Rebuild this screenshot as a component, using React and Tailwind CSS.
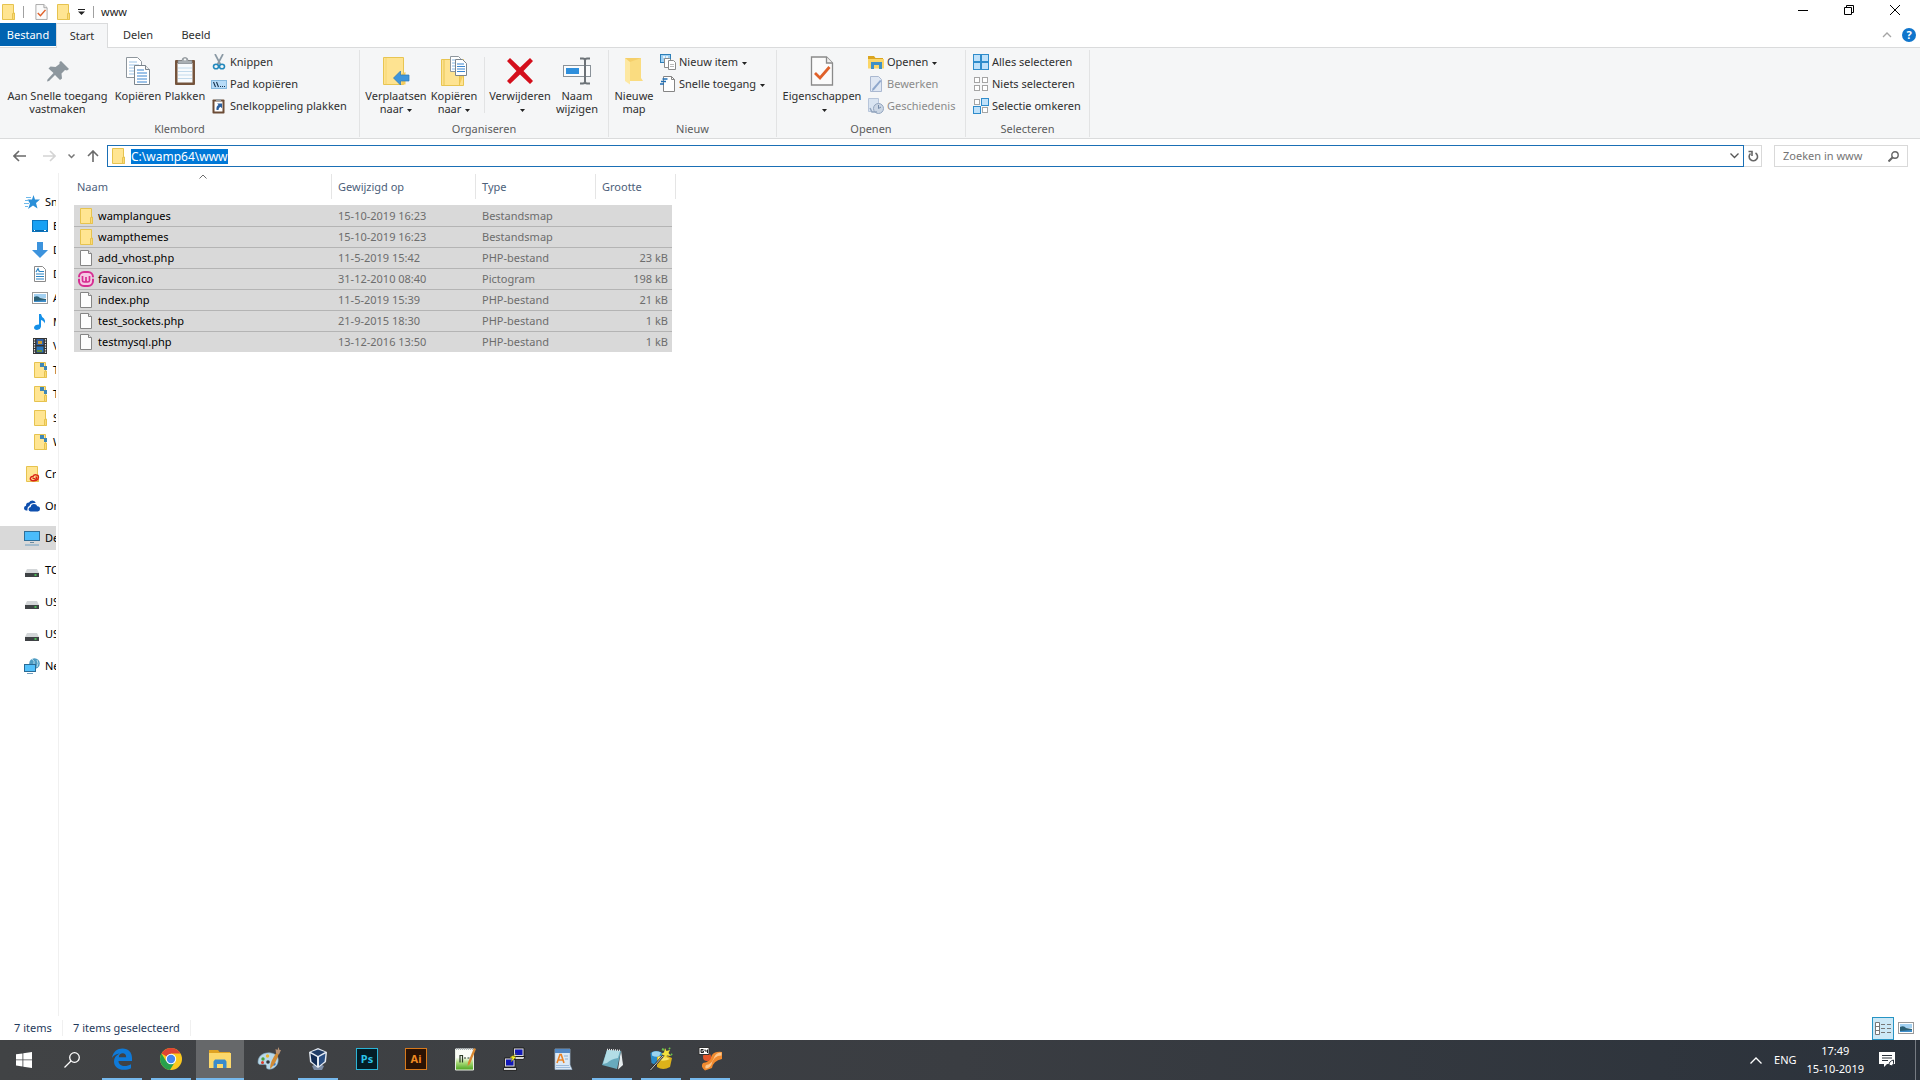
import React, { useEffect, useRef } from 'react';

/* ---------- Icons ---------- */

const Folder = ({ badge }) => (
  <svg className="h-4 w-4 shrink-0" viewBox="0 0 16 16">
    <path d="M2.5.5h11v11.500h.8v3.500H2.500z" fill="#ffe592" stroke="#e6c34f" />
    <path d="M12.500 15.500v-6l2-.5v6.500z" fill="#fcd975" stroke="#e6c34f" />
    {badge === 'link' && <path d="M8 1h4v3h3v4h-3V5H8z" fill="#3f87b5" />}
    {badge === 'cloud' && (
      <g fill="none" stroke="#d92318" strokeWidth="1.400">
        <path d="M8 14.500c-3-1-1.500-4.500 1-4 1-2.500 5.500-2.200 5.500.8 0 3.200-4 4-6.500 3.200" />
        <path d="M8.500 12.500c1-1 2 .8 3.200.7 1.500-.2 1.300-2.200-.2-1.900" />
      </g>
    )}
  </svg>
);

const Page = () => (
  <svg className="h-4 w-4 shrink-0" viewBox="0 0 16 16">
    <path d="M2.500.5h8l3 3v12h-11z" fill="#fdfdfd" stroke="#858585" />
    <path d="M10.500.5v3h3" fill="#e8e8e8" stroke="#858585" />
  </svg>
);

const CheckPage = ({ className }) => (
  <svg className={className} viewBox="0 0 24 30">
    <path d="M1.500 1h15l6 6v22h-21z" fill="#fbfbfb" stroke="#8a8a8a" strokeWidth="1.300" />
    <path d="M16.500 1v6h6" fill="#eee" stroke="#8a8a8a" strokeWidth="1.300" />
    <path d="M5 17l5 5 9.500-11" fill="none" stroke="#e0612a" strokeWidth="2.800" />
  </svg>
);

const WampIcon = () => (
  <svg className="h-4 w-4 shrink-0" viewBox="0 0 16 16">
    <rect x="1" y="1" width="14" height="14" rx="5" fill="#f7c8e4" stroke="#d62e92" strokeWidth="2" />
    <path d="M0 7h3M13 7h3" stroke="#d9d9d9" strokeWidth="1.500" />
    <path d="M4.500 5v4.500q0 1.500 1.700 1.500T8 9.500V6v3.500q0 1.500 1.700 1.500t1.800-1.500V5" fill="none" stroke="#d62e92" strokeWidth="1.700" />
  </svg>
);

const Pin = () => (
  <svg className="h-7 w-7" viewBox="0 0 28 28">
    <path d="M17 4l8 8-2 1.500-2-.5-3.500 3.500.5 5-2 1.500-5-5L5 24l-2 .5.500-2 6-6.500-5-4.500L6.500 9.500l5 .5L15.500 7 15.500 5z" fill="#8d979e" />
  </svg>
);

const CopyPages = ({ className }) => (
  <svg className={className} viewBox="0 0 26 30">
    <path d="M1.500 1.500h11l4 4v16h-15z" fill="#fff" stroke="#8e969d" />
    <path d="M4 6h8M4 9h10M4 12h10M4 15h10M4 18h10" stroke="#9bc3e6" />
    <path d="M9.500 9.500h11l4 4v15h-15z" fill="#fff" stroke="#7b858d" />
    <path d="M20.500 9.500v4h4" fill="#eee" stroke="#7b858d" />
    <path d="M12 14h7M12 17h10M12 20h10M12 23h10M12 26h10" stroke="#3a85d0" />
  </svg>
);

const Clipboard = () => (
  <svg className="h-[30px] w-6" viewBox="0 0 24 30">
    <rect x="2" y="4" width="20" height="25" rx="1" fill="#75543c" />
    <rect x="4.500" y="7" width="15" height="19.500" fill="#f8fbfd" />
    <path d="M5 12h14M5 15.500h14M5 19h14M5 22.500h14" stroke="#c4dbec" />
    <path d="M5 7.500V4.500h4q0-3 3-3t3 3h4v3z" fill="#a9afb3" stroke="#80878c" strokeWidth=".7" />
    <circle cx="12" cy="3.500" r="1" fill="#fff" />
  </svg>
);

const Scissors = () => (
  <svg className="h-4 w-4 shrink-0" viewBox="0 0 16 16" fill="none">
    <path d="M4 0l5.500 10.500M12 0L6.500 10.500" stroke="#8b9aa5" strokeWidth="1.700" />
    <ellipse cx="5" cy="12.500" rx="2.500" ry="2.300" stroke="#2389bd" strokeWidth="1.600" />
    <ellipse cx="11" cy="12.500" rx="2.500" ry="2.300" stroke="#2389bd" strokeWidth="1.600" />
  </svg>
);

const PathCopy = () => (
  <svg className="h-4 w-4 shrink-0" viewBox="0 0 16 16">
    <rect x=".5" y="4.500" width="15" height="8" fill="#b7dcf8" stroke="#86b9de" />
    <path d="M2.500 6l2 5M5.500 6l2 5M9 10.500h1M11 10.500h1M13 10.500h1" stroke="#17324d" strokeWidth="1.100" />
  </svg>
);

const PasteShortcut = () => (
  <svg className="h-4 w-4 shrink-0" viewBox="0 0 16 16">
    <rect x="1.500" y="1.500" width="12" height="14" rx=".8" fill="#6c4c36" />
    <rect x="3.500" y="3.500" width="8" height="10" fill="#fff" />
    <path d="M5 3V1h5v2z" fill="#9aa0a4" />
    <path d="M5.500 12q-.5-4 2-5L6.200 5.500H11v4.800L9.500 8.800Q7.500 9.500 7.500 12z" fill="#2a5f9e" />
  </svg>
);

const MoveTo = () => (
  <svg className="h-[30px] w-7" viewBox="0 0 28 30">
    <path d="M1.500 1.500h20v27h-20z" fill="#fee391" stroke="#e8c552" />
    <path d="M4 2v26" stroke="#f6d670" />
    <path d="M19.500 18l4-2v12.500h-4z" fill="#f5cc5d" />
    <path d="M11.500 22l7-7v4h8.500v6h-8.500v4z" fill="#3f96dc" stroke="#2b78b6" strokeWidth=".7" />
  </svg>
);

const CopyTo = () => (
  <svg className="h-8 w-7" viewBox="0 0 28 32">
    <path d="M1.500 4.500h22v26h-22z" fill="#fee391" stroke="#e8c552" />
    <path d="M4 5v25M19.500 30v-9l4-1" stroke="#e8c552" fill="#f5cc5d" />
    <path d="M10.500 1.500h8l2 2v13h-10z" fill="#fff" stroke="#8e969d" />
    <path d="M12 5h3M12 8h3M12 11h3M12 14h3" stroke="#85b8e8" />
    <path d="M15.500 4.500h7l4 4v12h-11z" fill="#fff" stroke="#7b858d" />
    <path d="M17 9h7M17 11.500h8M17 14h8M17 16.500h8" stroke="#3a85d0" />
  </svg>
);

const DeleteX = () => (
  <svg className="h-[26px] w-[26px]" viewBox="0 0 26 26">
    <path d="M3 0l10 9.500L23 0l3 3-9.500 10L26 23l-3 3-10-9.500L3 26l-3-3 9.500-10L0 3z" fill="#d40f1c" />
  </svg>
);

const Rename = () => (
  <svg className="h-7 w-7" viewBox="0 0 28 28">
    <rect x=".5" y="8.500" width="27" height="11" fill="#fbfcfd" stroke="#8a9299" />
    <rect x="3" y="11" width="13" height="6" fill="#2f8fdc" />
    <path d="M17 1.500h3q2 0 2 2v21q0 2-2 2h-3M27 1.500h-3q-2 0-2 2M27 26.500h-3q-2 0-2-2" fill="none" stroke="#6d7378" strokeWidth="2" />
  </svg>
);

const NewFolder = () => (
  <svg className="h-7 w-5" viewBox="0 0 20 28">
    <path d="M1 1h16v23H1z" fill="#f5cf6a" />
    <path d="M1 1l5 4v22.500L1 24z" fill="#fde8a2" />
    <path d="M6 5l11-4v20l2 3H6z" fill="#fadc80" />
  </svg>
);

const NewItem = () => (
  <svg className="h-4 w-4 shrink-0" viewBox="0 0 16 16">
    <rect x=".5" y=".5" width="10" height="8" fill="#9fd0f3" stroke="#2d7fb8" />
    <path d="M3 3h2M6 3h2" stroke="#fff" strokeWidth="1.500" />
    <path d="M4.500 4.500h5l2 2v7h-7z" fill="#fff" stroke="#8a8a8a" />
    <path d="M8.500 6.500h5l2 2v7h-7z" fill="#fff" stroke="#8a8a8a" />
    <path d="M10 10.500h4M10 12.500h4" stroke="#bbb" />
  </svg>
);

const EasyAccess = () => (
  <svg className="h-4 w-4 shrink-0" viewBox="0 0 16 16">
    <path d="M3.500.5h8l3 3v12h-11z" fill="#fff" stroke="#858585" />
    <path d="M11.500.5v3h3" fill="none" stroke="#858585" />
    <path d="M2.500 3h5M1 5.500h5M0 8h4" stroke="#1f6fb5" strokeWidth="1.300" />
  </svg>
);

const OpenFolder = () => (
  <svg className="h-4 w-4 shrink-0" viewBox="0 0 16 16">
    <path d="M0 2h6l1.500 2H15v10H0z" fill="#dba520" />
    <path d="M0 5h16v9.500H0z" fill="#fbd668" />
    <path d="M3 15V8h11v7h-3v-4H6v4z" fill="#3f90c6" />
  </svg>
);

const EditPage = () => (
  <svg className="h-4 w-4 shrink-0" viewBox="0 0 16 16">
    <path d="M2.500.5h8l3 3v12h-11z" fill="#dfe7f3" stroke="#aab8d0" />
    <path d="M13.500 5L6 14l-2 1 .5-2.500L12 4z" fill="#8ea7cc" />
  </svg>
);

const History = () => (
  <svg className="h-4 w-4 shrink-0" viewBox="0 0 16 16">
    <path d="M.5.500h10v13H.5z" fill="#d9e4f1" stroke="#b7c5da" />
    <circle cx="10.500" cy="10.500" r="5" fill="#cbd6e4" stroke="#93a5be" />
    <path d="M10.500 7v3.500L13 9" fill="none" stroke="#758ba9" />
    <path d="M2 10l2 4h5" fill="none" stroke="#93a5be" strokeWidth="1.500" />
  </svg>
);

// on: indexes of the filled squares, reading order
const Squares = ({ on }) => (
  <svg className="h-4 w-4 shrink-0" viewBox="0 0 16 16">
    {[[0, 0], [8, 0], [0, 8], [8, 8]].map(([x, y], i) =>
      on.includes(i) ? (
        <rect key={i} x={x + 0.5} y={y + 0.5} width="7" height="7" fill="#bfe1fa" stroke="#2f8ccb" />
      ) : (
        <rect key={i} x={x + 1.5} y={y + 1.5} width="5" height="5" fill="#fff" stroke="#a5a5a5" />
      )
    )}
  </svg>
);

const Caret = () => (
  <svg className="ml-1 inline-block h-[3px] w-[5px] align-middle" viewBox="0 0 5 3">
    <path d="M0 0h5L2.500 3z" fill="#222" />
  </svg>
);

const Star = () => (
  <svg className="h-4 w-4 shrink-0" viewBox="0 0 16 16">
    <path d="M9.500 1l1.500 4.500h5L12 9l1.500 5.500-4.500-3-5 3.500L6 9.500 3.500 5.500H8z" fill="#2a8fd8" />
    <path d="M2 3.500h5M1 6.500h4M0 9.500h5M1 12.500h3" stroke="#6fb9ea" />
  </svg>
);

const Desktop = () => (
  <svg className="h-4 w-4 shrink-0" viewBox="0 0 16 16">
    <rect x=".5" y="2.500" width="15" height="11" fill="#18a1f4" stroke="#0b74bd" />
    <path d="M1 12.500h14" stroke="#0a65a8" />
    <path d="M2 12.500h1M12 12.500h2" stroke="#fff" />
  </svg>
);

const Download = () => (
  <svg className="h-4 w-4 shrink-0" viewBox="0 0 16 16">
    <path d="M5 0h6v8h5l-8 8-8-8h5z" fill="#3c93dd" />
  </svg>
);

const Doc = () => (
  <svg className="h-4 w-4 shrink-0" viewBox="0 0 16 16">
    <path d="M2.500.5h8l3 3v12h-11z" fill="#fff" stroke="#8a8a8a" />
    <path d="M4 8h8M4 10.500h8M4 13h8M8 5.500h4M4 6l2-3.500L7.500 6" stroke="#2a84c4" strokeWidth="1.200" fill="none" />
  </svg>
);

const Picture = () => (
  <svg className="h-4 w-4 shrink-0" viewBox="0 0 16 16">
    <rect x=".5" y="2.500" width="15" height="11" fill="#fff" stroke="#9a9a9a" />
    <path d="M2 4h12v4H2z" fill="#a3d1f2" />
    <path d="M2 7q4-2 6 1l6 1v3H2z" fill="#2c5f74" />
    <path d="M2 11l12-1v2H2z" fill="#3f8fcb" />
  </svg>
);

const Music = () => (
  <svg className="h-4 w-4 shrink-0" viewBox="0 0 16 16">
    <path d="M7 0h2q.5 3 3 4.500 2 2.500.5 5Q12 6.500 9 6v6.500q-.5 3-4 3.500-3-.3-3-2.500 .5-3 5-3z" fill="#1590e8" />
  </svg>
);

const Video = () => (
  <svg className="h-4 w-4 shrink-0" viewBox="0 0 16 16">
    <path d="M1 0h14v16H1z" fill="#333" />
    <path d="M2.500 1v15M13.500 1v15" stroke="#ddd" strokeWidth="1.200" strokeDasharray="1.500 1" />
    <path d="M4.500 1h7v6h-7z" fill="#3263a8" />
    <path d="M4.500 8.500h7v6h-7z" fill="#2b77bf" />
    <path d="M6 3h4v3H6z" fill="#cc9a31" />
    <path d="M5 12h5v2H5z" fill="#6a8f38" />
  </svg>
);

const OneDrive = () => (
  <svg className="h-4 w-4 shrink-0" viewBox="0 0 16 16">
    <path d="M2 12.500Q0 12 0 10q0-2 2-2.300Q2 4.500 5 4.500q1-2 3.500-2 2.500.2 3.300 2.500Q6 4.500 5.500 8 3 8.500 3.500 12.500z" fill="#0e4fae" />
    <path d="M6.500 13.500q-2-.3-2-2.200 0-2 2.200-2.200.3-3 3.300-3.100 2.500 0 3.300 2.300 2.700.2 2.700 2.700 0 2.300-2.200 2.500z" fill="#0e4fae" />
  </svg>
);

const ThisPC = () => (
  <svg className="h-4 w-4 shrink-0" viewBox="0 0 16 16">
    <rect x=".5" y="1.500" width="15" height="9" fill="#4bbcfb" stroke="#2f6f99" />
    <path d="M6 12h4v1H6z" fill="#6d8ba0" />
    <path d="M1 15h14" stroke="#6f9ebf" />
  </svg>
);

const Drive = () => (
  <svg className="h-4 w-4 shrink-0" viewBox="0 0 16 16">
    <path d="M3 7h10l2 4H1z" fill="#d3d6d8" />
    <path d="M1 11h14v4H1z" fill="#3f4245" />
    <path d="M10.500 13h2" stroke="#4fe25a" strokeWidth="1.500" />
  </svg>
);

const Network = () => (
  <svg className="h-4 w-4 shrink-0" viewBox="0 0 16 16">
    <circle cx="10.500" cy="5.500" r="5.300" fill="#4f9cc2" />
    <path d="M8 1q3 2 2 5M13 2q2 3 0 7" stroke="#b7dcec" fill="none" />
    <rect x=".5" y="6.500" width="11" height="7" fill="#53c1fb" stroke="#2a6a94" />
    <path d="M3 15.500h6" stroke="#6f9ebf" />
  </svg>
);

/* ---------- Taskbar icons ---------- */

const WindowsLogo = () => (
  <svg className="h-4 w-4" viewBox="0 0 16 16" fill="#fff">
    <path d="M0 2.300l6.500-.9v6.100H0zM7.300 1.300L16 0v7.500H7.300zM0 8.300h6.500v6.200L0 13.600zM7.300 8.300H16V16l-8.700-1.300z" />
  </svg>
);

const SearchLens = () => (
  <svg className="h-4 w-4" viewBox="0 0 16 16" fill="none" stroke="#fff" strokeWidth="1.300">
    <circle cx="10.500" cy="5.500" r="4.800" />
    <path d="M7 9l-6.500 6.500" />
  </svg>
);

const Edge = () => (
  <svg className="h-[22px] w-[22px]" viewBox="0 0 22 22">
    <path d="M1 10C2 3.500 6.500.5 11.500.5c6 0 9.500 4 9.500 9.500V13H7.500c0 3.500 3 5 6 5 2.500 0 4.500-.8 6.500-1.800V20.300c-2 1-4.500 1.500-7 1.500C7 21.800 3 18.500 3 13.500c0-3.500 2-6.500 5.500-8C5 6 2.500 7.500 1 10zM7.800 9.300h7.400c0-2.800-1.400-4-3.500-4S8 6.800 7.800 9.300z" fill="#0f7ad8" />
  </svg>
);

const Chrome = () => (
  <svg className="h-[22px] w-[22px]" viewBox="0 0 22 22">
    <circle cx="11" cy="11" r="11" fill="#fbc91f" />
    <path d="M11 11L1.500 5.500A11 11 0 0120.500 5.500H11z" fill="#df4433" />
    <path d="M1.500 5.500A11 11 0 0010 22l5.500-9L11 11 6 13z" fill="#28a04b" />
    <circle cx="11" cy="11" r="5.200" fill="#fff" />
    <circle cx="11" cy="11" r="4.200" fill="#4586ee" />
  </svg>
);

const ExplorerLogo = () => (
  <svg className="h-[18px] w-[22px]" viewBox="0 0 22 18">
    <path d="M0 0h9l1.500 2H21v6H0z" fill="#dfa323" />
    <path d="M0 3h22v15H0z" fill="#fbd86c" />
    <path d="M4.500 18v-6.500l1.500-2h10l1.500 2V18H14v-4H8v4z" fill="#3a8bcb" />
  </svg>
);

const Paint = () => (
  <svg className="h-6 w-6" viewBox="0 0 24 24">
    <path d="M1 15C1 8 8 5 14 6c6 1 8 5 7 9-1 5-6 8-10 7-3-.5 0-4-3-4.500C5 17 1 19 1 15z" fill="#b9d9ea" stroke="#7fa6bd" strokeWidth=".6" />
    <circle cx="6" cy="12" r="1.700" fill="#4aa13a" />
    <circle cx="10.500" cy="9" r="1.700" fill="#e8b530" />
    <circle cx="5.500" cy="15.500" r="1.500" fill="#d93b2a" />
    <circle cx="11" cy="15" r="1.800" fill="#34383c" />
    <circle cx="17" cy="17" r="1.700" fill="#3574c2" />
    <path d="M13 22q0-8 7-17l2 1q-3 11-9 16z" fill="#d18b35" />
    <path d="M19 6l-.5-4 2 1 1-3 1 3h1.500l-2 4.500z" fill="#b99374" />
  </svg>
);

const VirtualBox = () => (
  <svg className="h-6 w-5" viewBox="0 0 20 24">
    <path d="M10 16l6 3-2 4H6l-2-4z" fill="#7b8ca6" />
    <path d="M10 1l9 4-1 10-8 6-8-6L1 5z" fill="#e5ebf3" />
    <path d="M10 2.500L17 5l-7 4-7-4z" fill="#203d68" />
    <path d="M2.500 6.500L9 10v9l-5.500-4.500z" fill="#122c55" />
    <path d="M17.500 6.500L11 10v9l5.500-4.500z" fill="#294e82" />
  </svg>
);

const NotepadPlus = () => (
  <svg className="h-6 w-[22px]" viewBox="0 0 22 24">
    <defs>
      <linearGradient id="npp" x1="0" y1="0" x2="0" y2="1">
        <stop offset=".4" stopColor="#fafcf6" />
        <stop offset=".65" stopColor="#a9dc7a" />
        <stop offset="1" stopColor="#4ba31d" />
      </linearGradient>
    </defs>
    <path d="M1.500 2h18v21h-18z" fill="url(#npp)" stroke="#e9eee4" />
    <path d="M2 2h17" stroke="#aeb4ba" strokeDasharray="1 1" strokeWidth="2" />
    <path d="M6 15.500v-7h2.500v7M10 11h2M13.500 11h2" stroke="#2b3b26" fill="none" strokeWidth="1.200" />
    <path d="M20 1l2 1-6 15-2.500 2 .5-3.500z" fill="#d9872f" />
  </svg>
);

const Putty = () => (
  <svg className="h-6 w-6" viewBox="0 0 24 24">
    <path d="M11.500 1h10.500v8.500H11.500zM13 9.500h10l-1.500 3H12zM2.500 11h10.500v9H2.500zM1.500 20.500h13v3h-13z" fill="#d5d5d5" stroke="#111" strokeWidth=".8" />
    <path d="M13 2.500h7.500v5.500H13zM4 12.500h7.500v6H4z" fill="#1218b8" />
    <path d="M14.500 6.500L11 9l3 1-5 5 1.500-4L8 10.500z" fill="#f6ee22" stroke="#847d0a" strokeWidth=".4" />
  </svg>
);

const WordPad = () => (
  <svg className="h-6 w-5" viewBox="0 0 20 24">
    <path d="M2 2h15v16l2 4.500H2z" fill="#dbe9f6" stroke="#a1bad4" strokeWidth=".7" />
    <path d="M2 2h15v4H2z" fill="#5288c4" />
    <path d="M11 9h4M12 12h3" stroke="#8aaed2" />
    <path d="M4 16l3-8.500h1.200L11 16M5 13h5" fill="none" stroke="#e98428" strokeWidth="1.600" />
    <path d="M3 18.500h13M3 20.500h14" stroke="#9dbbdc" />
  </svg>
);

const Notepad = () => (
  <svg className="h-6 w-6" viewBox="0 0 24 24">
    <path d="M21 3l2 15-5 4.500z" fill="#e6ecee" />
    <path d="M7 3l14 1-4 18-15-4z" fill="#68aabd" />
    <path d="M7 3l13 1-2 7q-7 1-11 5l-4 1z" fill="#b3dde6" />
    <path d="M7 2.500l14 1" stroke="#ededed" strokeWidth="1.600" strokeDasharray="1 1" />
  </svg>
);

const Wand = () => (
  <svg className="h-6 w-6" viewBox="0 0 24 24">
    <path d="M1.500 6q5-4 12 0l-1 12q-6 1-10-2z" fill="#2a8cc9" />
    <path d="M3 5.500q4-2.500 9 0l-2 4q-4 1-7-1z" fill="#9ad3ef" />
    <path d="M8 10q8-3 15 1l-2 9q-7 4-13 0z" fill="#dcb21a" />
    <path d="M9 10q6-2 12 2-6 3-12 1z" fill="#f8e66e" />
    <path d="M1.500 23L14 9" stroke="#2c2c2c" strokeWidth="2.200" />
    <path d="M1.500 23L14 9" stroke="#c9c9c9" strokeWidth="1" />
    <path d="M16 1l1.500 3 3.500-1-1.500 3L22 9l-4-.5L16 12l-.5-3.500L12 7l3-1.500z" fill="#f3e13d" />
    <path d="M13 2l2 1M20 1l1 1M22 7l1 1" stroke="#69c34d" strokeWidth="2" />
  </svg>
);

const Orange64 = () => (
  <svg className="h-6 w-6" viewBox="0 0 24 24">
    <path d="M24 5v7q-9 2-10 9l-7 2.500q-5-4-2-7.500 7-1 9-8 3-4 10-3z" fill="#f18a2e" />
    <path d="M23.500 5.500v3q-8 0-10 9-2 4-6 4-1-4 3-4 4-2 6-8 2-4 7-4z" fill="#fbc78e" />
    <circle cx="9" cy="10" r="4" fill="#e3562a" />
    <rect x="1" y=".5" width="10" height="7" fill="#fff" stroke="#333" />
    <path d="M5.500 2.500H3v3h2.500V4H3M7 2.500V4h2.500M9.500 2.500V6" fill="none" stroke="#222" />
  </svg>
);

/* ---------- Ribbon pieces ---------- */

const BigButton = ({ icon, children, className }) => (
  <button type="button" className={`flex flex-col items-center text-center leading-[13px] ${className}`}>
    <span className="flex h-9 items-center justify-center">{icon}</span>
    <span className="whitespace-nowrap">{children}</span>
  </button>
);

const SmallButton = ({ icon, children, disabled, menu }) => (
  <button type="button" disabled={disabled} className="flex h-[22px] items-center gap-[3px] whitespace-nowrap disabled:text-[#8b8b8b]">
    {icon}
    <span>{children}{menu && <Caret />}</span>
  </button>
);

const Group = ({ label, children, className }) => (
  <section aria-label={label} className={`flex shrink-0 flex-col border-r border-[#e2e3e4] ${className}`}>
    <div className="flex flex-1 items-start">{children}</div>
    <div className="h-4 text-center leading-4 text-[#5c5c5c]">{label}</div>
  </section>
);

const Ribbon = () => (
  <div className="flex h-[92px] border-y border-[#dadbdc] bg-[#f5f6f7] pb-px pt-[2px] text-[#2f2f2f]">
    <Group label="Klembord" className="w-[360px]">
      <div className="flex pt-[3px]">
        <BigButton className="w-[115px]" icon={<Pin />}>Aan Snelle toegang<br />vastmaken</BigButton>
        <BigButton className="w-[46px]" icon={<CopyPages className="h-[30px] w-[26px]" />}>Kopiëren</BigButton>
        <BigButton className="w-12" icon={<Clipboard />}>Plakken</BigButton>
      </div>
      <div className="pl-[2px] pt-px">
        <SmallButton icon={<Scissors />}>Knippen</SmallButton>
        <SmallButton icon={<PathCopy />}>Pad kopiëren</SmallButton>
        <SmallButton icon={<PasteShortcut />}>Snelkoppeling plakken</SmallButton>
      </div>
    </Group>

    <Group label="Organiseren" className="w-[249px]">
      <div className="flex pl-[6px] pt-[3px]">
        <BigButton className="w-[60px]" icon={<MoveTo />}>Verplaatsen<br />naar<Caret /></BigButton>
        <BigButton className="w-14" icon={<CopyTo />}>Kopiëren<br />naar<Caret /></BigButton>
        <div className="mx-[2px] mt-1 h-14 w-px bg-[#e2e3e4]" />
        <BigButton className="w-[66px]" icon={<DeleteX />}>Verwijderen<br /><Caret /></BigButton>
        <BigButton className="w-12" icon={<Rename />}>Naam<br />wijzigen</BigButton>
      </div>
    </Group>

    <Group label="Nieuw" className="w-[168px]">
      <div className="pt-[3px]">
        <BigButton className="w-[50px]" icon={<NewFolder />}>Nieuwe<br />map</BigButton>
      </div>
      <div className="pl-px pt-px">
        <SmallButton icon={<NewItem />} menu>Nieuw item</SmallButton>
        <SmallButton icon={<EasyAccess />} menu>Snelle toegang</SmallButton>
      </div>
    </Group>

    <Group label="Openen" className="w-[189px]">
      <div className="pt-[3px]">
        <BigButton className="w-[90px]" icon={<CheckPage className="h-[30px] w-6" />}>Eigenschappen<br /><Caret /></BigButton>
      </div>
      <div className="pl-px pt-px">
        <SmallButton icon={<OpenFolder />} menu>Openen</SmallButton>
        <SmallButton icon={<EditPage />} disabled>Bewerken</SmallButton>
        <SmallButton icon={<History />} disabled>Geschiedenis</SmallButton>
      </div>
    </Group>

    <Group label="Selecteren" className="w-[124px]">
      <div className="pl-[7px] pt-px">
        <SmallButton icon={<Squares on={[0, 1, 2, 3]} />}>Alles selecteren</SmallButton>
        <SmallButton icon={<Squares on={[]} />}>Niets selecteren</SmallButton>
        <SmallButton icon={<Squares on={[1, 2]} />}>Selectie omkeren</SmallButton>
      </div>
    </Group>
  </div>
);

/* ---------- Window ---------- */

const TitleBar = () => (
  <header className="flex h-[23px] items-center">
    <Folder />
    <div className="mx-[7px] h-3 w-px bg-[#a0a0a0]" />
    <button type="button" aria-label="Eigenschappen" className="ml-[3px] flex w-[14px] justify-center">
      <CheckPage className="h-4 w-[13px]" />
    </button>
    <button type="button" aria-label="Nieuwe map" className="ml-[7px]"><Folder /></button>
    <button type="button" aria-label="Werkbalk aanpassen" className="ml-[6px] flex w-2 justify-center">
      <svg className="h-[6px] w-[7px]" viewBox="0 0 7 6"><path d="M0 0h7v1H0zM0 2.500h7L3.500 6z" fill="#222" /></svg>
    </button>
    <div className="ml-2 mr-[7px] h-3 w-px bg-[#a0a0a0]" />
    <h1 className="flex-1">www</h1>
    <div className="flex self-start pr-[2px]">
      <button type="button" aria-label="Minimaliseren" className="flex h-5 w-[46px] items-center justify-center">
        <svg className="h-[10px] w-[10px]" viewBox="0 0 10 10"><path d="M0 5.500h10" stroke="#000" /></svg>
      </button>
      <button type="button" aria-label="Verkleinen" className="flex h-5 w-[46px] items-center justify-center">
        <svg className="h-[10px] w-[10px]" viewBox="0 0 10 10" fill="none" stroke="#000"><path d="M.5 2.500h7v7h-7zM2.500 2.500v-2h7v7h-2" /></svg>
      </button>
      <button type="button" aria-label="Sluiten" className="flex h-5 w-[46px] items-center justify-center">
        <svg className="h-[10px] w-[10px]" viewBox="0 0 10 10"><path d="M0 0l10 10M10 0L0 10" stroke="#000" /></svg>
      </button>
    </div>
  </header>
);

const Tabs = () => (
  <nav className="flex h-6 items-stretch text-[#2f2f2f]">
    <button type="button" className="mb-px w-14 bg-[#0063b1] text-white">Bestand</button>
    <button type="button" className="z-10 -mb-px w-[52px] border border-b-0 border-[#dadbdc] bg-[#f5f6f7]">Start</button>
    <button type="button" className="w-[60px]">Delen</button>
    <button type="button" className="w-14">Beeld</button>
    <div className="flex flex-1 items-center justify-end gap-[10px] pr-1">
      <button type="button" aria-label="Lint minimaliseren">
        <svg className="h-[6px] w-[10px]" viewBox="0 0 10 6"><path d="M1 5l4-4 4 4" fill="none" stroke="#a5a5a5" strokeWidth="1.300" /></svg>
      </button>
      <button type="button" aria-label="Help" className="h-[14px] w-[14px] rounded-full bg-[#0f75cc] text-center font-bold leading-[14px] text-white">?</button>
    </div>
  </nav>
);

const AddressBar = () => {
  const inputRef = useRef(null);

  useEffect(() => {
    inputRef.current.focus();
    inputRef.current.select();
  }, []);

  return (
    <div className="flex h-[34px] items-center pr-3">
      <button type="button" aria-label="Terug" className="ml-[13px] w-[13px]">
        <svg className="h-3 w-[13px]" viewBox="0 0 13 12"><path d="M13 6H1.500M6 1L1 6l5 5" fill="none" stroke="#6a6a6a" strokeWidth="1.600" /></svg>
      </button>
      <button type="button" aria-label="Vooruit" className="ml-[17px] w-[13px]">
        <svg className="h-3 w-[13px]" viewBox="0 0 13 12"><path d="M0 6h11.500M7 1l5 5-5 5" fill="none" stroke="#d4d4d4" strokeWidth="1.600" /></svg>
      </button>
      <button type="button" aria-label="Recente locaties" className="ml-3 w-[7px]">
        <svg className="h-[5px] w-[7px]" viewBox="0 0 7 5"><path d="M.5.5l3 3 3-3" fill="none" stroke="#777" strokeWidth="1.500" /></svg>
      </button>
      <button type="button" aria-label="Omhoog" className="ml-3 w-3">
        <svg className="h-3 w-3" viewBox="0 0 12 12"><path d="M6 12V1.500M1 6l5-5 5 5" fill="none" stroke="#6a6a6a" strokeWidth="1.600" /></svg>
      </button>
      <div className="ml-2 flex h-[22px] flex-1 items-center border border-[#1a6fb5] pl-[2px] pr-1">
        <Folder />
        <input
          ref={inputRef}
          aria-label="Adres"
          defaultValue="C:\wamp64\www"
          className="ml-[5px] h-[15px] flex-1 text-xs leading-[15px] text-black outline-none selection:bg-[#0078d7] selection:text-white"
        />
        <button type="button" aria-label="Vorige locaties">
          <svg className="h-[6px] w-[9px]" viewBox="0 0 9 6"><path d="M.5.5l4 4 4-4" fill="none" stroke="#555" strokeWidth="1.300" /></svg>
        </button>
      </div>
      <button type="button" aria-label="Vernieuwen" className="flex h-[22px] w-[18px] items-center justify-center border border-l-0 border-[#d9d9d9]">
        <svg className="h-3 w-3" viewBox="0 0 12 12"><path d="M8.500 3A4.200 4.200 0 1 1 3.500 3.500M1.500 1.500h3.500V6" fill="none" stroke="#666" strokeWidth="1.600" /></svg>
      </button>
      <div className="ml-3 flex h-[22px] w-[134px] items-center border border-[#d9d9d9] pl-2 pr-2">
        <input aria-label="Zoeken in www" placeholder="Zoeken in www" className="min-w-0 flex-1 outline-none placeholder:text-[#757575]" />
        <svg className="h-[11px] w-[11px]" viewBox="0 0 11 11" fill="none" stroke="#666"><circle cx="7" cy="4" r="3.200" strokeWidth="1.400" /><path d="M4.700 6.300L.5 10.500" strokeWidth="2" /></svg>
      </div>
    </div>
  );
};

// the pane is collapsed, only the first letters of a name have room
const places = [
  { name: 'Sn', icon: <Star />, children: [
    { name: 'B', icon: <Desktop /> },
    { name: 'D', icon: <Download /> },
    { name: 'D', icon: <Doc /> },
    { name: 'A', icon: <Picture /> },
    { name: 'M', icon: <Music /> },
    { name: 'V', icon: <Video /> },
    { name: 'T', icon: <Folder badge="link" /> },
    { name: 'T', icon: <Folder badge="link" /> },
    { name: 'S', icon: <Folder /> },
    { name: 'W', icon: <Folder badge="link" /> },
  ] },
  { name: 'Cr', icon: <Folder badge="cloud" /> },
  { name: 'On', icon: <OneDrive /> },
  { name: 'De', icon: <ThisPC />, active: true },
  { name: 'TO', icon: <Drive /> },
  { name: 'US', icon: <Drive /> },
  { name: 'US', icon: <Drive /> },
  { name: 'Ne', icon: <Network /> },
];

const Sidebar = () => (
  <aside className="w-[59px] shrink-0 border-r border-[#f0f0f0] pr-[2px] pt-[17px]">
    <ul className="flex flex-col gap-2 text-black">
      {places.map((place, i) => (
        <li key={i}>
          <a href="#" className={`flex h-6 items-center gap-[5px] overflow-hidden whitespace-nowrap pl-6 ${place.active ? 'bg-[#d9d9d9]' : ''}`}>
            {place.icon}
            <span>{place.name}</span>
          </a>
          {place.children && (
            <ul>
              {place.children.map((child, j) => (
                <li key={j}>
                  <a href="#" className="flex h-6 items-center gap-[5px] overflow-hidden whitespace-nowrap pl-8">
                    {child.icon}
                    <span>{child.name}</span>
                  </a>
                </li>
              ))}
            </ul>
          )}
        </li>
      ))}
    </ul>
  </aside>
);

const files = [
  { name: 'wamplangues', date: '15-10-2019 16:23', type: 'Bestandsmap', size: '', icon: <Folder /> },
  { name: 'wampthemes', date: '15-10-2019 16:23', type: 'Bestandsmap', size: '', icon: <Folder /> },
  { name: 'add_vhost.php', date: '11-5-2019 15:42', type: 'PHP-bestand', size: '23 kB', icon: <Page /> },
  { name: 'favicon.ico', date: '31-12-2010 08:40', type: 'Pictogram', size: '198 kB', icon: <WampIcon /> },
  { name: 'index.php', date: '11-5-2019 15:39', type: 'PHP-bestand', size: '21 kB', icon: <Page /> },
  { name: 'test_sockets.php', date: '21-9-2015 18:30', type: 'PHP-bestand', size: '1 kB', icon: <Page /> },
  { name: 'testmysql.php', date: '13-12-2016 13:50', type: 'PHP-bestand', size: '1 kB', icon: <Page /> },
];

const FileList = () => (
  <main className="flex-1 pl-[15px] pt-px">
    <table className="w-[602px] table-fixed border-separate border-spacing-0 text-left">
      <colgroup>
        <col className="w-[258px]" />
        <col className="w-36" />
        <col className="w-[120px]" />
        <col className="w-[76px]" />
        <col className="w-1" />
      </colgroup>
      <thead className="text-[#4c607a]">
        <tr>
          <th className="p-0 pb-[6px] font-normal">
            <div className="relative h-[25px] border-r border-[#e5e5e5] pl-[3px] leading-[25px]">
              Naam
              <svg className="absolute left-1/2 top-0 h-[5px] w-2 -translate-x-1/2" viewBox="0 0 8 5"><path d="M.5 4.500L4 1l3.500 3.500" fill="none" stroke="#6d6d6d" /></svg>
            </div>
          </th>
          <th className="p-0 pb-[6px] font-normal"><div className="h-[25px] border-r border-[#e5e5e5] pl-[6px] leading-[25px]">Gewijzigd op</div></th>
          <th className="p-0 pb-[6px] font-normal"><div className="h-[25px] border-r border-[#e5e5e5] pl-[6px] leading-[25px]">Type</div></th>
          <th colSpan={2} className="p-0 pb-[6px] font-normal"><div className="h-[25px] border-r border-[#e5e5e5] pl-[6px] leading-[25px]">Grootte</div></th>
        </tr>
      </thead>
      <tbody className="text-[#6d6d6d]">
        {files.map((file, i) => {
          const cell = `h-[21px] bg-[#d9d9d9] py-0 leading-5 ${i > 0 ? 'border-t border-[#b4b4b4]' : ''}`;
          return (
            <tr key={file.name}>
              <td className={`${cell} pl-1 pr-0`}>
                <div className="flex items-center gap-1 text-black">{file.icon}<span>{file.name}</span></div>
              </td>
              <td className={`${cell} pl-[6px] pr-0`}>{file.date}</td>
              <td className={`${cell} pl-[6px] pr-0`}>{file.type}</td>
              <td className={`${cell} pl-0 pr-1 text-right`}>{file.size}</td>
              <td className="p-0" />
            </tr>
          );
        })}
      </tbody>
    </table>
  </main>
);

const StatusBar = () => (
  <footer className="flex h-6 items-center text-[#1e395b]">
    <span className="w-[63px] border-r border-[#f0f0f0] pl-[14px]">7 items</span>
    <span className="w-32 border-r border-[#f0f0f0] pl-[10px]">7 items geselecteerd</span>
    <div className="ml-auto flex items-center gap-1 pr-[6px]">
      <button type="button" aria-label="Details" className="flex h-[23px] w-[22px] items-center justify-center border border-[#2694c4] bg-[#cce8f6]">
        <svg className="h-[13px] w-4" viewBox="0 0 16 13" fill="none" stroke="#777">
          <path d="M.5.5h4v12h-4zM.5 4.500h4M.5 8.500h4" fill="#fff" />
          <path d="M6 2.500h4M12 2.500h4M6 6.500h4M12 6.500h4M6 10.500h4M12 10.500h4" />
        </svg>
      </button>
      <button type="button" aria-label="Grote pictogrammen"><Picture /></button>
    </div>
  </footer>
);

const apps = [
  { name: 'Edge', icon: <Edge />, running: true },
  { name: 'Chrome', icon: <Chrome />, running: true },
  { name: 'Verkenner', icon: <ExplorerLogo />, active: true },
  { name: 'Paint', icon: <Paint /> },
  { name: 'VirtualBox', icon: <VirtualBox />, running: true },
  { name: 'Photoshop', icon: <span className="flex h-[22px] w-[22px] items-center justify-center border border-[#2bb5d8] bg-[#041d26] font-bold text-[#2bc4ea]">Ps</span> },
  { name: 'Illustrator', icon: <span className="flex h-[22px] w-[22px] items-center justify-center border border-[#d97a1c] bg-[#2a1204] font-bold text-[#f08a22]">Ai</span> },
  { name: 'Notepad++', icon: <NotepadPlus /> },
  { name: 'PuTTY', icon: <Putty /> },
  { name: 'WordPad', icon: <WordPad /> },
  { name: 'Kladblok', icon: <Notepad />, running: true },
  { name: 'Wizard', icon: <Wand />, running: true },
  { name: 'X64', icon: <Orange64 />, running: true },
];

const Taskbar = () => (
  <div className="flex h-10 bg-linear-to-r from-[#414345] via-[#3a3d42] to-[#2b323b] text-white">
    <button type="button" aria-label="Start" className="flex w-12 items-center justify-center"><WindowsLogo /></button>
    <button type="button" aria-label="Zoeken" className="flex w-12 items-center justify-center"><SearchLens /></button>
    <div className="ml-[2px] flex gap-px">
      {apps.map((app) => (
        <button key={app.name} type="button" aria-label={app.name} className={`flex w-12 flex-col items-center ${app.active ? 'bg-[#66686a]' : ''}`}>
          <span className="flex h-[38px] items-center">{app.icon}</span>
          {app.running && <span className="h-[2px] w-10 bg-[#76b9ed]" />}
          {app.active && <span className="h-[2px] w-12 bg-[#76b9ed]" />}
        </button>
      ))}
    </div>
    <div className="ml-auto flex items-center">
      <button type="button" aria-label="Verborgen pictogrammen">
        <svg className="h-[7px] w-3" viewBox="0 0 12 7"><path d="M.5 6.500L6 1l5.500 5.500" fill="none" stroke="#fff" strokeWidth="1.300" /></svg>
      </button>
      <button type="button" className="ml-3">ENG</button>
      <button type="button" className="ml-[10px] text-center leading-[18px]">17:49<br />15-10-2019</button>
      <button type="button" aria-label="Meldingen" className="ml-[15px] mr-5">
        <svg className="h-4 w-4" viewBox="0 0 16 16">
          <path d="M0 0h16v12H8l-3 3v-3H0z" fill="#fff" />
          <path d="M3 3.500h10M3 6h10M3 8.500h6" stroke="#2b323b" />
          <path d="M10 13q0-4 4.500-5 .8 4-1.500 6z" fill="#fff" stroke="#2b323b" />
        </svg>
      </button>
      <div className="mr-1 h-10 w-px bg-[#767b82]" />
    </div>
  </div>
);

export default function App() {
  return (
    <div className="flex min-h-screen flex-col bg-white font-['Noto_Sans','Open_Sans',sans-serif] text-[11px] leading-4 text-[#222]">
      <TitleBar />
      <Tabs />
      <Ribbon />
      <AddressBar />
      <div className="flex flex-1">
        <Sidebar />
        <FileList />
      </div>
      <StatusBar />
      <Taskbar />
    </div>
  );
}
